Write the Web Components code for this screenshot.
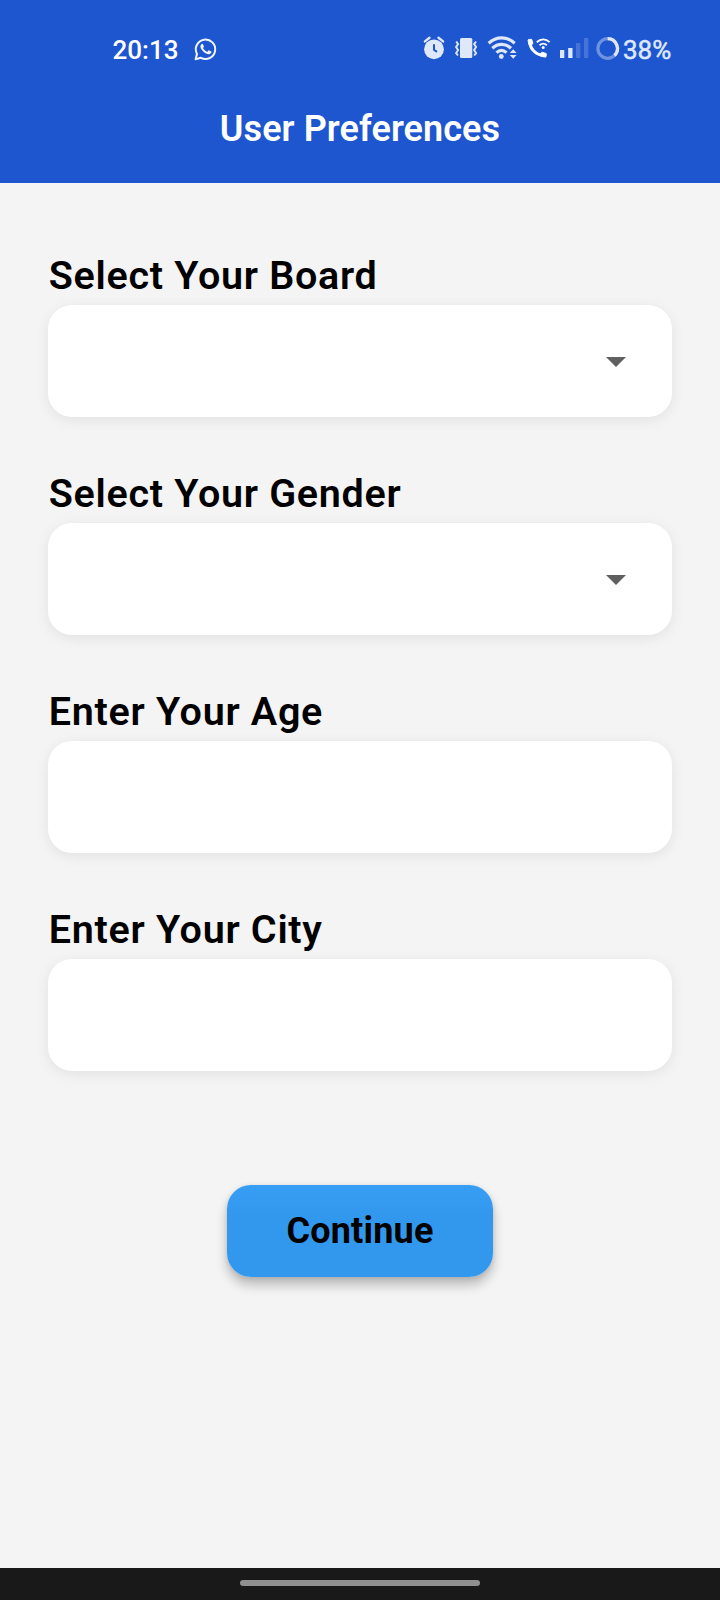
<!DOCTYPE html>
<html lang="en">
<head>
<meta charset="utf-8">
<title>User Preferences</title>
<style>
html, body { margin: 0; height: 100%; background: #f4f4f4; font-family: Roboto, "Liberation Sans", sans-serif; }
</style>
</head>
<body>
<preferences-screen></preferences-screen>
<script>
const define = (name, html) => customElements.define(name, class extends HTMLElement {
  constructor() {
    super();
    const t = document.createElement('template');
    t.innerHTML = html;
    this.attachShadow({ mode: 'open' }).appendChild(t.content.cloneNode(true));
  }
});

define('status-bar', `
<style>
:host { display: flex; align-items: center; justify-content: space-between; box-sizing: border-box; height: 98px; padding: 0 48px 0 112.500px; color: #fff; font-size: 26px; font-weight: 500; line-height: 32px; }
div { display: flex; align-items: center; height: 32px; }
svg { display: block; flex: none; }
.time { margin: 2px 15px 0 0; width: 65px; }
.right { color: #dfe8fb; }
.pct { width: 49px; font-weight: 400; margin-top: 2px; white-space: nowrap; -webkit-text-stroke: 0.5px currentColor; }
</style>
<div>
  <span class="time">20:13</span>
  <svg width="24" height="32" viewBox="193 33 24 32" fill="none" stroke="#f1f5ff" stroke-width="2">
    <path d="M195.600 59.300l1.400-5.400a9.700 9.700 0 1 1 3.900 3.900z" stroke-linejoin="round"/>
    <path d="M202.200 43.800c-2.400 1.200-2.200 3.700-.2 6.300 2.400 3.100 5.400 5 8 3.800 1.300-.6 1.500-1.700 1.400-2.300l-2.800-1.300-1.400 1.600c-2-.8-3.300-2.200-4.200-3.800l1-1.400-1.100-2.800z" fill="#f1f5ff" stroke="none"/>
  </svg>
</div>
<div class="right">
  <svg width="201" height="32" viewBox="422 33 201 32" fill="none" stroke="#dfe8fb">
    <circle cx="434" cy="49.300" r="9.900" fill="#dfe8fb" stroke="none"/>
    <path d="M424.900 41.400l4.600-3.600M443.100 41.400l-4.600-3.600" stroke-width="2.400" stroke-linecap="round"/>
    <path d="M434 44.300v5.500l3 2" stroke="#1e56cf" stroke-width="2"/>
    <rect x="460" y="38" width="12.300" height="20" rx="1.500" fill="#dfe8fb" stroke="none"/>
    <path d="M456.200 41.500l1.900 2.600-2 3 2 3-2 3 1.900 2.400M476 41.500l-1.900 2.600 2 3-2 3 2 3-1.900 2.400" stroke-width="1.900"/>
    <path d="M488.700 43.200c7.700-7.100 18.300-7.100 26 0M492.300 48.200c5.600-5.100 13.100-5.100 18.700 0M496.500 52.700c3.100-2.900 6.900-2.900 10 0" stroke-width="3.200"/>
    <circle cx="501.300" cy="56.500" r="2.400" fill="#dfe8fb" stroke="none"/>
    <path d="M509.800 53.100l3.400-3.800 3.400 3.800zM509.800 54.900l3.400 3.800 3.400-3.800z" fill="#dfe8fb" stroke="none"/>
    <path d="M529.800 41.800c.4 7.500 6.300 13.300 14 13.600" stroke="#fff" stroke-width="3"/>
    <path d="M529.400 39.400h2.300l1.200 4.200-3 2.600c-1.100-2-1.700-4-1.800-6.200 0-.4.600-.6 1.300-.6zM546.200 55.800v-2.300l-4.300-1.300-2.700 3c2 1.100 4.100 1.700 6.300 1.900.4 0 .7-.6.700-1.300z" fill="#fff" stroke="#fff" stroke-linejoin="round"/>
    <path d="M536.800 42.200c3.900-3.800 9-3.800 12.800 0M539.600 45.200c2.300-2 4.900-2 7.200 0" stroke="#fff" stroke-width="1.900"/>
    <circle cx="543.200" cy="47.500" r="1.500" fill="#fff" stroke="none"/>
    <g stroke="none" fill="#dfe8fb"><rect x="560" y="50" width="4.300" height="8"/><rect x="568.200" y="48" width="4.300" height="10"/>
    <g fill="#4773d9"><rect x="576" y="43" width="4.300" height="15"/><rect x="584" y="38" width="4.300" height="20"/></g></g>
    <circle cx="607.700" cy="48.500" r="9.800" stroke="#6f92e2" stroke-width="3.200"/>
    <path d="M607.700 38.700a9.800 9.800 0 0 1 6.800 16.800" stroke-width="3.200"/>
  </svg>
  <span class="pct">38%</span>
</div>`);

define('app-header', `
<style>
:host { display: block; height: 183px; background: #1e56cf; color: #fff; }
h1 { margin: 10px 0 0; font-size: 36px; line-height: 42px; font-weight: 600; letter-spacing: 0.08px; text-align: center; }
</style>
<status-bar></status-bar>
<h1><slot></slot></h1>`);

define('drop-arrow', `
<style>:host { display: block; margin-top: 2px; } svg { display: block; }</style>
<svg width="20" height="10" viewBox="0 0 20 10"><path d="M0 0h20L10 10z" fill="#606060"/></svg>`);

define('form-field', `
<style>
:host { display: block; }
label { display: block; font-size: 39.500px; line-height: 48px; font-weight: 600; letter-spacing: 0.7px; color: #000; padding-left: 0.8px; margin-bottom: 5px; }
.box { display: flex; align-items: center; justify-content: flex-end; box-sizing: border-box; height: 112px; padding-right: 46px; border-radius: 24px; background: #fff; box-shadow: 0 3px 14px rgba(0,0,0,.08); }
</style>
<label><slot></slot></label>
<div class="box"><slot name="control"></slot></div>`);

define('primary-button', `
<style>
:host { display: block; }
button { display: block; width: 266px; height: 92px; margin: 0 auto; padding: 0; border: 0; border-radius: 24px; background: linear-gradient(#369ef4, #3298ee 35%); color: #000; font: 700 36px/42px Roboto, sans-serif; letter-spacing: 0.2px; box-shadow: 0 8px 12px rgba(0,0,0,.24), 0 1px 5px rgba(0,0,0,.1); }
</style>
<button><slot></slot></button>`);

define('nav-bar', `
<style>
:host { display: flex; align-items: center; justify-content: center; height: 32px; box-sizing: border-box; padding-bottom: 2px; background: #191919; }
span { width: 240px; height: 6px; border-radius: 3px; background: #8f8f8f; }
</style>
<span></span>`);

define('preferences-screen', `
<style>
:host { display: flex; flex-direction: column; width: 720px; height: 1600px; background: #f4f4f4; overflow: hidden; }
main { flex: 1; padding: 69px 48px 0; }
form-field { margin-bottom: 53px; }
primary-button { margin-top: 114px; }
</style>
<app-header>User Preferences</app-header>
<main>
  <form-field>Select Your Board<drop-arrow slot="control"></drop-arrow></form-field>
  <form-field>Select Your Gender<drop-arrow slot="control"></drop-arrow></form-field>
  <form-field>Enter Your Age</form-field>
  <form-field>Enter Your City</form-field>
  <primary-button>Continue</primary-button>
</main>
<nav-bar></nav-bar>`);
</script>
</body>
</html>
